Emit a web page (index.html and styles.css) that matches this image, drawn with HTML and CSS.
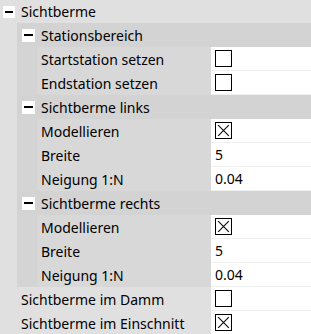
FILE: index.html
```html
<!DOCTYPE html>
<html>
<head>
<meta charset="utf-8">
<link rel="stylesheet" href="styles.css">
</head>
<body>
<div class="tree">
  <div class="row top-head">
    <span class="toggle"></span><span class="label-text">Sichtberme</span>
  </div>
  <div class="group">
    <div class="row head">
      <span class="toggle"></span><span class="label-text">Stationsbereich</span>
    </div>
    <div class="sub">
      <div class="prop">
        <div class="name">Startstation setzen</div>
        <div class="value"><span class="check"></span></div>
      </div>
      <div class="prop">
        <div class="name">Endstation setzen</div>
        <div class="value"><span class="check"></span></div>
      </div>
    </div>
    <div class="row head">
      <span class="toggle"></span><span class="label-text">Sichtberme links</span>
    </div>
    <div class="sub">
      <div class="prop">
        <div class="name">Modellieren</div>
        <div class="value"><span class="check checked"></span></div>
      </div>
      <div class="prop">
        <div class="name">Breite</div>
        <div class="value">5</div>
      </div>
      <div class="prop">
        <div class="name">Neigung 1:N</div>
        <div class="value">0.04</div>
      </div>
    </div>
    <div class="row head">
      <span class="toggle"></span><span class="label-text">Sichtberme rechts</span>
    </div>
    <div class="sub">
      <div class="prop">
        <div class="name">Modellieren</div>
        <div class="value"><span class="check checked"></span></div>
      </div>
      <div class="prop">
        <div class="name">Breite</div>
        <div class="value">5</div>
      </div>
      <div class="prop">
        <div class="name">Neigung 1:N</div>
        <div class="value">0.04</div>
      </div>
    </div>
  </div>
  <div class="prop top-prop">
    <div class="name">Sichtberme im Damm</div>
    <div class="value"><span class="check"></span></div>
  </div>
  <div class="prop top-prop">
    <div class="name">Sichtberme im Einschnitt</div>
    <div class="value"><span class="check checked"></span></div>
  </div>
</div>
</body>
</html>
```
FILE: styles.css
```css
html, body {
  margin: 0;
  padding: 0;
  background: #e0e0e0;
}
.tree {
  width: 311px;
  height: 334px;
  overflow: hidden;
  background: #e0e0e0;
  font-family: "Noto Sans", "Open Sans", sans-serif;
  font-size: 14px;
  color: #000;
}
.row {
  display: flex;
  align-items: center;
  height: 24px;
}
.top-head {
  height: 23px;
  padding-left: 3px;
}
.toggle {
  width: 12px;
  height: 12px;
  background: #fff;
  position: relative;
  flex: none;
  margin-right: 6px;
}
.toggle::after {
  content: "";
  position: absolute;
  left: 2px;
  right: 2px;
  top: 5px;
  height: 2px;
  background: #000;
}
.group {
  margin-left: 17px;
  background: #d4d4d4;
}
.head {
  padding-left: 5px;
  background: #d3d3d3;
}
.head .toggle {
  width: 13px;
  height: 13px;
  margin-right: 6px;
}
.head .toggle::after {
  top: 5px;
}
.sub {
  margin-left: 20px;
  background: #d8d8d8;
}
.prop {
  display: flex;
  height: 24px;
}
.name {
  width: 174px;
  padding-left: 4px;
  box-sizing: border-box;
  display: flex;
  align-items: center;
  white-space: nowrap;
}
.top-prop .name {
  width: 211px;
  padding-left: 21px;
}
.value {
  flex: 1;
  background: #fff;
  border-bottom: 1px solid #f0f0f0;
  box-sizing: border-box;
  padding-left: 4px;
  display: flex;
  align-items: center;
}
.check {
  width: 17px;
  height: 17px;
  box-sizing: border-box;
  border: 1px solid #000;
  background: #fff;
  position: relative;
}
.checked::before,
.checked::after {
  content: "";
  position: absolute;
  left: 0;
  top: 7px;
  width: 15px;
  height: 1px;
  background: #000;
  transform: rotate(45deg);
}
.checked::after {
  transform: rotate(-45deg);
}
```
